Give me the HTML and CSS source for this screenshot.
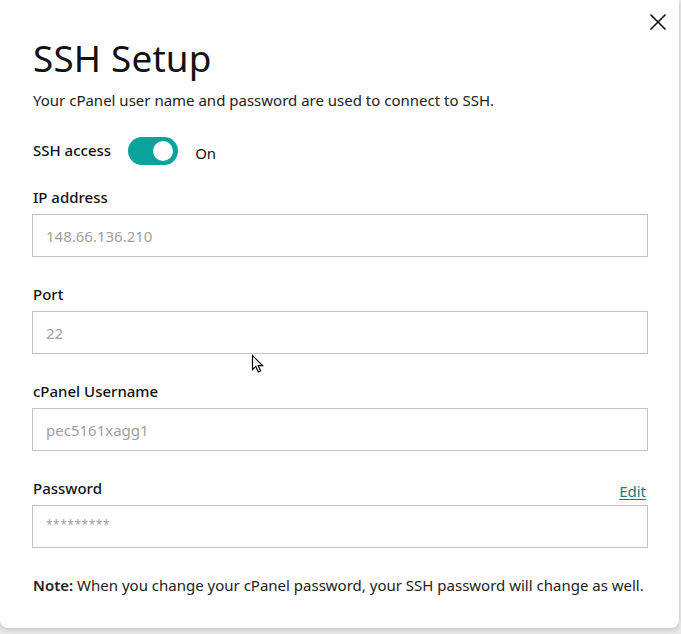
FILE: index.html
```html
<!DOCTYPE html>
<html lang="en">
<head>
<meta charset="utf-8">
<title>SSH Setup</title>
<link rel="stylesheet" href="styles.css">
</head>
<body>
<div class="modal">
  <button class="close" aria-label="Close">
    <svg width="18" height="18" viewBox="0 0 18 18"><path d="M1.5 1.5 L16.5 16.5 M16.5 1.5 L1.5 16.5" stroke="#111" stroke-width="1.6" fill="none"/></svg>
  </button>
  <h1 class="title">SSH Setup</h1>
  <p class="intro">Your cPanel user name and password are used to connect to SSH.</p>
  <div class="access">
    <span class="access-label">SSH access</span>
    <span class="toggle"><span class="knob"></span></span>
    <span class="state">On</span>
  </div>
  <div class="field">
    <div class="label-row"><label class="label">IP address</label></div>
    <div class="input">148.66.136.210</div>
  </div>
  <div class="field">
    <div class="label-row"><label class="label">Port</label></div>
    <div class="input">22</div>
  </div>
  <div class="field">
    <div class="label-row"><label class="label">cPanel Username</label></div>
    <div class="input">pec5161xagg1</div>
  </div>
  <div class="field">
    <div class="label-row"><label class="label">Password</label><a class="edit" href="#">Edit</a></div>
    <div class="input input-pw">*********</div>
  </div>
  <p class="note"><strong>Note:</strong> When you change your cPanel password, your SSH password will change as well.</p>
  <svg class="cursor" width="14" height="20" viewBox="0 0 14 20"><path d="M1.5 1.5 L1.5 15.5 L4.8 12.4 L7.3 18 L9.6 17 L7.2 11.6 L11.6 11.6 Z" fill="#fff" stroke="#000" stroke-width="1.2" stroke-linejoin="miter"/></svg>
</div>
</body>
</html>
```
FILE: styles.css
```css
html, body {
  margin: 0;
  padding: 0;
}
body {
  background: #e8e8e8;
  width: 681px;
  height: 634px;
  overflow: hidden;
  font-family: "Noto Sans", "Liberation Sans", sans-serif;
  color: #111;
}
.modal {
  position: relative;
  box-sizing: border-box;
  width: 679px;
  height: 628px;
  background: #fff;
  border-radius: 0 0 8px 8px;
  box-shadow: 0 2px 4px rgba(0,0,0,0.15);
  padding: 34px 33px 0 32px;
}
.close {
  position: absolute;
  top: 13px;
  right: 12px;
  border: 0;
  background: none;
  padding: 0;
  width: 18px;
  height: 18px;
  cursor: pointer;
}
.close svg { display: block; }
.title {
  margin: 0;
  font-size: 36.8px;
  font-weight: 400;
  line-height: 48px;
  letter-spacing: 0.2px;
  padding-left: 1px;
}
.intro {
  margin: 8px 0 0 1px;
  font-size: 15px;
  line-height: 20px;
  color: #222;
}
.access {
  display: flex;
  align-items: center;
  margin-top: 27px;
  height: 28px;
  padding-left: 1px;
}
.access-label {
  font-size: 15px;
  font-weight: 500;
  margin-top: -2px;
}
.toggle {
  margin-left: 17px;
  width: 50px;
  height: 28px;
  border-radius: 14px;
  background: #0aa39b;
  position: relative;
  display: inline-block;
}
.knob {
  position: absolute;
  right: 5px;
  top: 4px;
  width: 20px;
  height: 20px;
  border-radius: 50%;
  background: #fff;
}
.state {
  margin-left: 17px;
  font-size: 15px;
  margin-top: 3px;
}
.field {
  margin-top: 22px;
}
.field + .field {
  margin-top: 27px;
}
.label-row {
  display: flex;
  justify-content: space-between;
  align-items: flex-end;
  height: 20px;
  padding-left: 1px;
}
.label {
  font-size: 15px;
  font-weight: 500;
  line-height: 20px;
}
.edit {
  color: #0b7f7a;
  font-size: 15px;
  line-height: 20px;
  text-decoration: underline;
  text-underline-offset: 2px;
  margin-bottom: -3px;
}
.input {
  box-sizing: border-box;
  margin-top: 7px;
  width: 616px;
  height: 43px;
  border: 1px solid #c4c4c4;
  padding: 0 13px;
  display: flex;
  align-items: center;
  font-size: 15px;
  color: #a0a0a0;
}
.input-pw {
  font-size: 12px;
  letter-spacing: 0.5px;
  padding-bottom: 4px;
}
.note {
  margin: 27px 0 0 1px;
  font-size: 15px;
  line-height: 20px;
  color: #222;
}
.note strong {
  font-weight: 600;
}
.cursor {
  position: absolute;
  left: 251px;
  top: 354px;
}
```
